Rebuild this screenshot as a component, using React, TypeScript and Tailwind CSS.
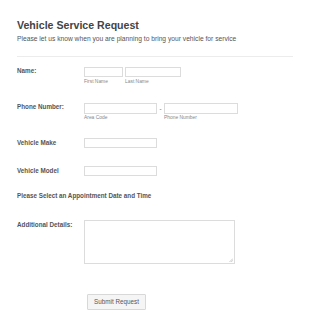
export default function App() {
  const label = "w-[67px] shrink-0 text-[6.3px] font-bold text-[#555]";
  const input = "h-[10px] border border-[#dcdcdc] bg-white";
  const sub = "mt-[1.5px] text-[4.9px] leading-[6px] text-[#888]";

  return (
    <div className="min-h-[319px] w-[310px] bg-white px-[17px] pt-[19px] font-['Liberation_Sans',Arial,sans-serif]">
      <h1 className="text-[10.6px] font-bold leading-[12px] text-[#444]">Vehicle Service Request</h1>
      <p className="mt-[4px] text-[6.7px] leading-[8px] text-[#555]">
        Please let us know when you are planning to bring your vehicle for service
      </p>
      <div className="mt-[12.7px] h-px w-[276px] bg-[#ececec]" />

      {/* Name */}
      <div className="mt-[10.7px] flex">
        <div className={`${label} leading-[7px]`}>Name:</div>
        <div className="flex gap-[2px]">
          <div className="flex flex-col">
            <div className={`${input} w-[39px]`} />
            <span className={sub}>First Name</span>
          </div>
          <div className="flex flex-col">
            <div className={`${input} w-[56px]`} />
            <span className={sub}>Last Name</span>
          </div>
        </div>
      </div>

      {/* Phone */}
      <div className="mt-[17.7px] flex">
        <div className={`${label} leading-[8px]`}>Phone Number:</div>
        <div className="flex">
          <div className="flex flex-col">
            <div className="h-[11px] w-[73px] border border-[#dcdcdc]" />
            <span className={sub}>Area Code</span>
          </div>
          <span className="w-[7px] text-center text-[6.3px] leading-[11px] text-[#777]">-</span>
          <div className="flex flex-col">
            <div className="h-[11px] w-[74px] border border-[#dcdcdc]" />
            <span className={sub}>Phone Number</span>
          </div>
        </div>
      </div>

      {/* Vehicle make */}
      <div className="mt-[17.4px] flex">
        <div className={`${label} leading-[10.6px]`}>Vehicle Make</div>
        <div className={`${input} w-[73px]`} />
      </div>

      {/* Vehicle model */}
      <div className="mt-[16.6px] flex">
        <div className={`${label} leading-[9.4px]`}>Vehicle Model</div>
        <div className={`${input} w-[73px]`} />
      </div>

      <p className="mt-[16.7px] text-[6.3px] font-bold leading-[8px] text-[#555]">
        Please Select an Appointment Date and Time
      </p>

      {/* Additional details */}
      <div className="mt-[19.3px] flex">
        <div className={`${label} pt-[1.7px] leading-[8px]`}>Additional Details:</div>
        <div className="relative">
          <textarea className="block h-[44px] w-[151px] resize-none border border-[#dcdcdc] bg-white outline-none" />
          <svg className="absolute bottom-[2px] right-[2px]" width="4" height="4" viewBox="0 0 4 4">
            <path d="M0.5 4 L4 0.5 M2.2 4 L4 2.2" stroke="#aaa" strokeWidth="0.6" />
          </svg>
        </div>
      </div>

      <div className="mt-[23.4px] pl-[70px]">
        <button className="h-[16px] w-[59px] rounded-[1px] border border-[#d8d8d8] bg-[#f5f5f5] text-[6.3px] leading-[14px] text-[#555]">
          Submit Request
        </button>
      </div>
    </div>
  );
}
